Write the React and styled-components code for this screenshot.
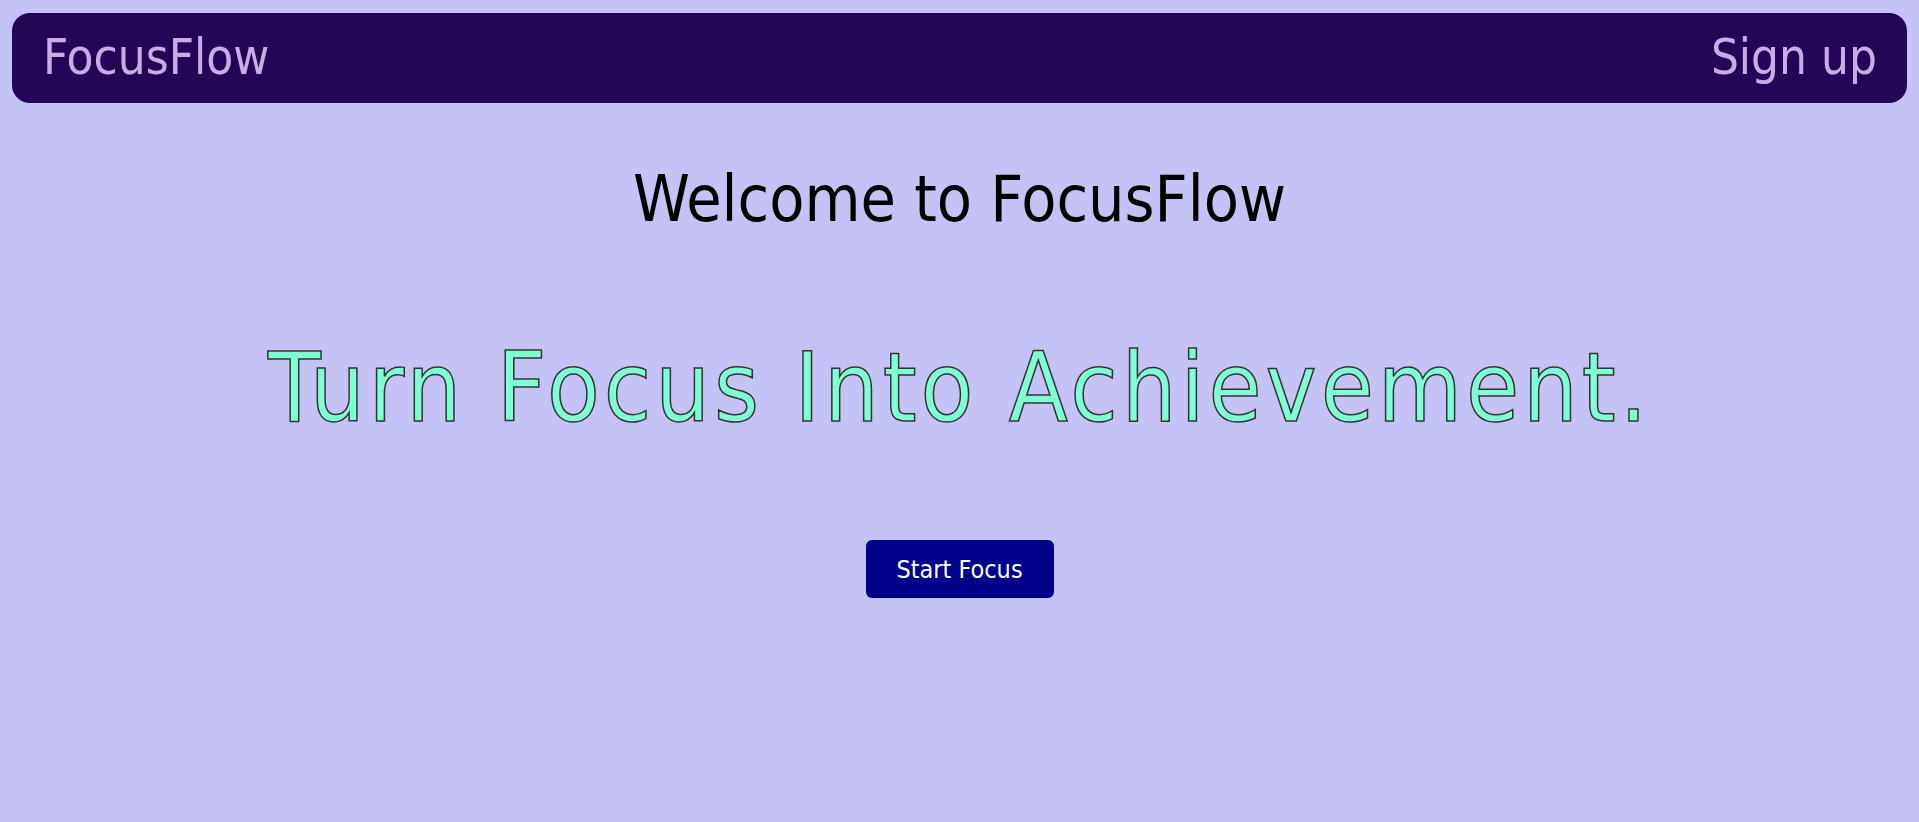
import React from 'react';
import styled, { createGlobalStyle } from 'styled-components';

const GlobalStyle = createGlobalStyle`
  html, body {
    margin: 0;
    padding: 0;
    background: #c5c3f6;
    min-height: 100%;
  }
  body {
    font-family: "DejaVu Sans Condensed", "DejaVu Sans", sans-serif;
    font-stretch: condensed;
  }
`;

const Page = styled.div`
  min-height: 822px;
  padding: 13px 12px 0;
  box-sizing: border-box;
`;

const NavBar = styled.nav`
  display: flex;
  justify-content: space-between;
  align-items: center;
  background: #220757;
  border-radius: 18px;
  padding: 17px 30px 17px 31px;
`;

const NavLink = styled.a`
  color: #c9abe6;
  font-size: 49px;
  line-height: 56px;
  text-decoration: none;
  cursor: pointer;
`;

const Hero = styled.main`
  display: flex;
  flex-direction: column;
  align-items: center;
`;

const Welcome = styled.h1`
  margin: 59px 0 0;
  font-size: 64px;
  font-weight: normal;
  color: #000;
`;

const Tagline = styled.h2`
  margin: 96px 0 0;
  font-size: 96px;
  font-weight: normal;
  letter-spacing: 4px;
  color: #7fffd4;
  -webkit-text-stroke: 1.5px #333;
`;

const StartButton = styled.button`
  margin-top: 96px;
  font-family: inherit;
  font-stretch: condensed;
  font-size: 25px;
  color: #fff;
  background: #00008b;
  border: none;
  border-radius: 6px;
  width: 188px;
  height: 58px;
  cursor: pointer;
`;

export default function App() {
  return (
    <>
      <GlobalStyle />
      <Page>
        <NavBar>
          <NavLink>FocusFlow</NavLink>
          <NavLink>Sign up</NavLink>
        </NavBar>
        <Hero>
          <Welcome>Welcome to FocusFlow</Welcome>
          <Tagline>Turn Focus Into Achievement.</Tagline>
          <StartButton>Start Focus</StartButton>
        </Hero>
      </Page>
    </>
  );
}
